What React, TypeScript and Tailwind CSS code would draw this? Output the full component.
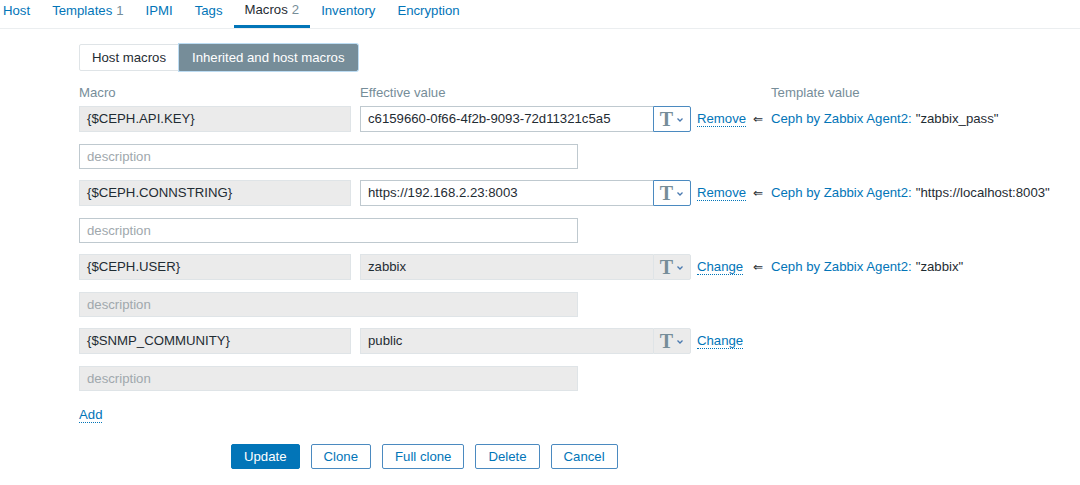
import React from "react";

type Macro = {
  name: string;
  value: string;
  inherited: boolean;
  action: string;
  template?: string;
  templateValue?: string;
};

const macros: Macro[] = [
  {
    name: "{$CEPH.API.KEY}",
    value: "c6159660-0f66-4f2b-9093-72d11321c5a5",
    inherited: false,
    action: "Remove",
    template: "Ceph by Zabbix Agent2:",
    templateValue: '"zabbix_pass"',
  },
  {
    name: "{$CEPH.CONNSTRING}",
    value: "https://192.168.2.23:8003",
    inherited: false,
    action: "Remove",
    template: "Ceph by Zabbix Agent2:",
    templateValue: '"https://localhost:8003"',
  },
  {
    name: "{$CEPH.USER}",
    value: "zabbix",
    inherited: true,
    action: "Change",
    template: "Ceph by Zabbix Agent2:",
    templateValue: '"zabbix"',
  },
  {
    name: "{$SNMP_COMMUNITY}",
    value: "public",
    inherited: true,
    action: "Change",
  },
];

const tabs = [
  { label: "Host" },
  { label: "Templates", count: "1" },
  { label: "IPMI" },
  { label: "Tags" },
  { label: "Macros", count: "2", active: true },
  { label: "Inventory" },
  { label: "Encryption" },
];

const TypeButton: React.FC<{ readOnly: boolean }> = ({ readOnly }) => (
  <div
    className={`flex h-full w-[38px] shrink-0 items-center justify-center gap-[3px] rounded-r-[2px] border ${
      readOnly ? "border-[#dfe4e7] bg-[#ebebeb]" : "border-[#4b8ac0] bg-white"
    }`}
  >
    <span className="font-['Liberation_Serif',serif] text-[20px] leading-none font-bold text-[#768d99]">T</span>
    <svg width="8" height="6" viewBox="0 0 8 6" className="mt-[1px]">
      <path d="M1.5 1.5 L4 4 L6.5 1.5" stroke="#4a7ab0" strokeWidth="1.3" fill="none" />
    </svg>
  </div>
);

const ActionLink: React.FC<{ children: React.ReactNode }> = ({ children }) => (
  <span className="border-b border-dotted border-[#0275b8] leading-[14px] text-[#0275b8]">{children}</span>
);

const MacroRow: React.FC<{ m: Macro }> = ({ m }) => (
  <>
    <div className="mb-[12px] flex h-[26px] items-center">
      <div className="flex h-full w-[272px] items-center border border-[#dfe4e7] bg-[#ebebeb] px-[7px] text-[#1f2c33]">
        {m.name}
      </div>
      <div className="ml-[9px] flex h-full w-[331px]">
        <div
          className={`flex h-full flex-1 items-center border border-r-0 px-[7px] text-[#1f2c33] ${
            m.inherited ? "border-[#dfe4e7] bg-[#ebebeb]" : "border-[#bfc9cf] bg-white"
          }`}
        >
          {m.value}
        </div>
        <TypeButton readOnly={m.inherited} />
      </div>
      <div className="ml-[6px] w-[56px]">
        <ActionLink>{m.action}</ActionLink>
      </div>
      {m.template && (
        <>
          <span className="w-[18px] text-[12px] text-[#1f2c33]">⇐</span>
          <span className="text-[#0275b8]">{m.template}</span>
          <span className="ml-[4px] text-[#1f2c33]">{m.templateValue}</span>
        </>
      )}
    </div>
    <div
      className={`mb-[11px] flex h-[25px] w-[499px] items-center border px-[7px] text-[#a0a8ad] ${
        m.inherited ? "border-[#dfe4e7] bg-[#ebebeb]" : "border-[#bfc9cf] bg-white"
      }`}
    >
      description
    </div>
  </>
);

const FormButton: React.FC<{ children: React.ReactNode; primary?: boolean }> = ({ children, primary }) => (
  <button
    type="button"
    className={`h-[25px] rounded-[2px] border px-[12px] leading-none ${
      primary ? "border-[#0275b8] bg-[#0275b8] text-white" : "border-[#4b8ac0] bg-white text-[#0275b8]"
    }`}
  >
    {children}
  </button>
);

export default function App() {
  return (
    <div className="h-[485px] w-[1080px] overflow-hidden bg-white font-['Liberation_Sans',Arial,sans-serif] text-[13.2px]">
      <div className="flex h-[29px] items-stretch border-b border-[#ebeef0] pl-0">
        <div className="ml-[-8px] flex">
          {tabs.map((t) => (
            <div
              key={t.label}
              className={`flex items-center px-[11px] pb-[6px] ${
                t.active ? "border-b-[3px] border-[#0275b8] pb-[3px] text-[#1f2c33]" : "text-[#0275b8]"
              }`}
            >
              {t.label}
              {t.count && <span className="ml-[4px] text-[#768d99]">{t.count}</span>}
            </div>
          ))}
        </div>
      </div>

      <div className="pl-[79px]">
        <div className="mt-[15px] flex h-[27px]">
          <div className="flex items-center rounded-l-[2px] border border-[#dfe4e7] bg-white px-[12px] text-[#1f2c33]">
            Host macros
          </div>
          <div className="flex items-center rounded-r-[2px] border border-[#768d99] bg-[#768d99] px-[12px] text-white shadow-[0_0_0_1px_#bcdcf3]">
            Inherited and host macros
          </div>
        </div>

        <div className="mt-[14px] flex h-[15px] items-center text-[#768d99]">
          <span className="w-[281px]">Macro</span>
          <span className="w-[411px]">Effective value</span>
          <span>Template value</span>
        </div>

        <div className="mt-[6px]">
          {macros.map((m) => (
            <MacroRow key={m.name} m={m} />
          ))}
        </div>

        <div className="mt-[17px] flex">
          <ActionLink>Add</ActionLink>
        </div>

        <div className="mt-[21px] flex gap-[11px] pl-[152px]">
          <FormButton primary>Update</FormButton>
          <FormButton>Clone</FormButton>
          <FormButton>Full clone</FormButton>
          <FormButton>Delete</FormButton>
          <FormButton>Cancel</FormButton>
        </div>
      </div>
    </div>
  );
}
